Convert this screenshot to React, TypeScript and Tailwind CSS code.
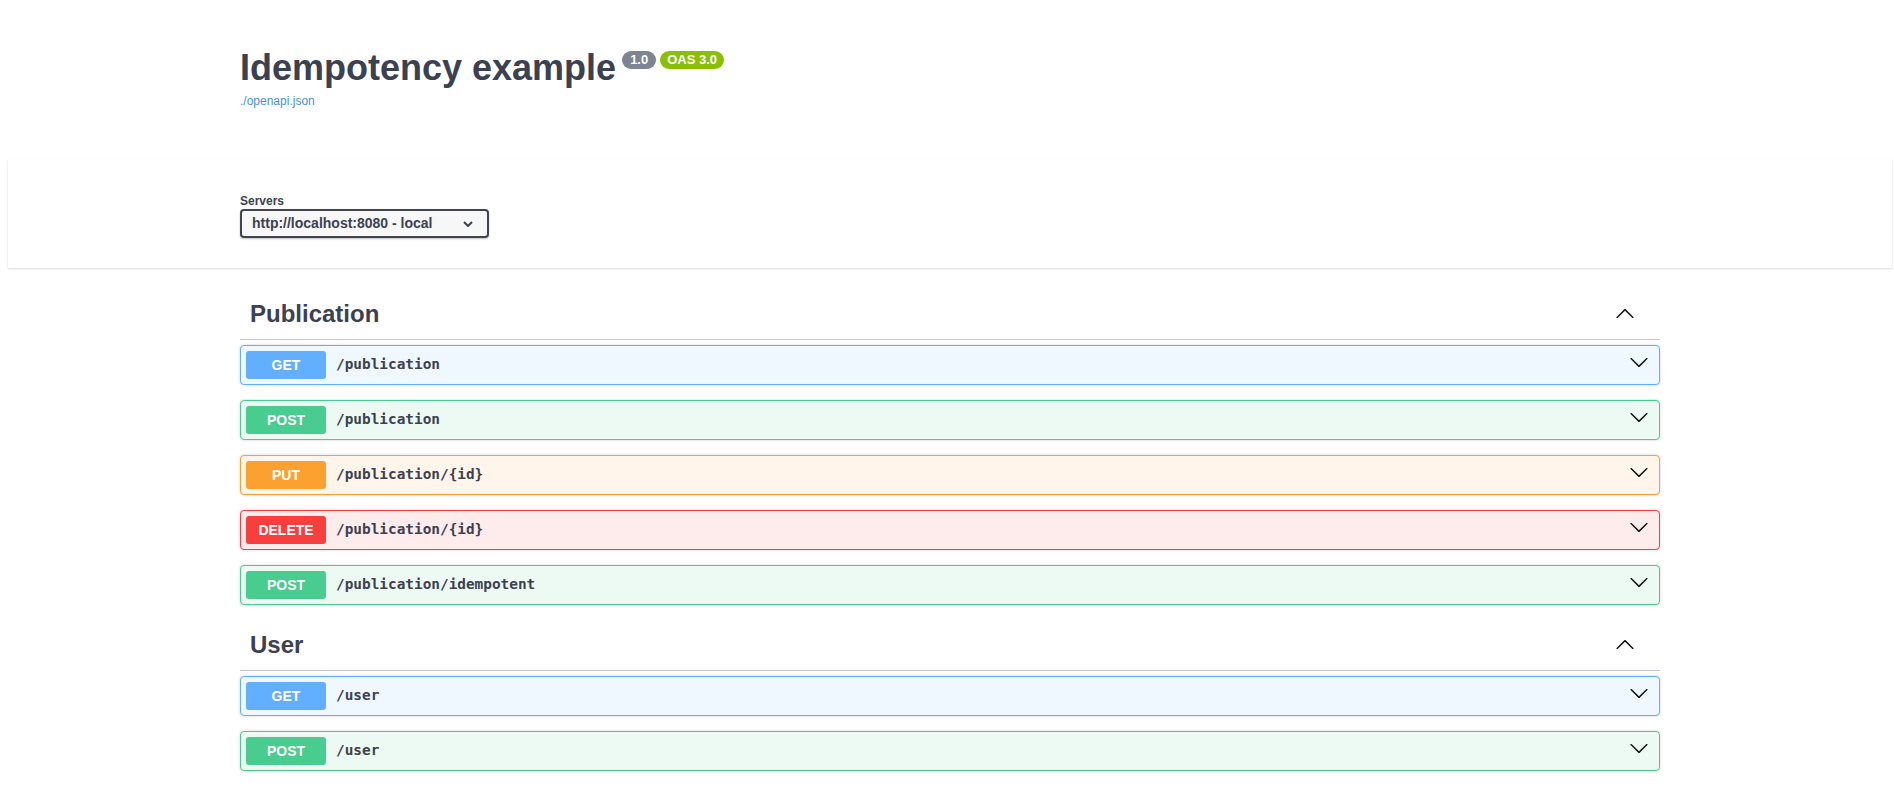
const sections = [
  {
    tag: "Publication",
    ops: [
      { method: "GET", path: "/publication" },
      { method: "POST", path: "/publication" },
      { method: "PUT", path: "/publication/{id}" },
      { method: "DELETE", path: "/publication/{id}" },
      { method: "POST", path: "/publication/idempotent" },
    ],
  },
  {
    tag: "User",
    ops: [
      { method: "GET", path: "/user" },
      { method: "POST", path: "/user" },
    ],
  },
];

const methodStyles: Record<string, { block: string; badge: string }> = {
  GET: { block: "bg-[#eff7ff] border-[#61affe]", badge: "bg-[#61affe]" },
  POST: { block: "bg-[#edfaf4] border-[#49cc90]", badge: "bg-[#49cc90]" },
  PUT: { block: "bg-[#fff5ea] border-[#fca130]", badge: "bg-[#fca130]" },
  DELETE: { block: "bg-[#feebeb] border-[#f93e3e]", badge: "bg-[#f93e3e]" },
};

function Arrow({ up = false, className = "" }: { up?: boolean; className?: string }) {
  return (
    <svg
      width="20"
      height="20"
      viewBox="0 0 20 20"
      className={`${up ? "rotate-180" : ""} ${className}`}
      fill="#111"
    >
      <path d="M17.418 6.109c.272-.268.709-.268.979 0s.271.701 0 .969l-7.908 7.83c-.27.268-.707.268-.979 0l-7.908-7.83c-.27-.268-.27-.701 0-.969.271-.268.709-.268.979 0L10 13.25l7.418-7.141z" />
    </svg>
  );
}

export default function App() {
  return (
    <div className="min-h-screen bg-white font-['Liberation_Sans',Arial,sans-serif] text-[#3b4151]">
      {/* Info */}
      <div className="ml-[240px] w-[1420px] pt-[50px]">
        <div className="flex items-start">
          <h2 className="text-[36px] leading-[36px] font-bold text-[#3b4151]">Idempotency example</h2>
          <span className="ml-[6px] mt-[1px] h-[18px] px-[8px] rounded-full bg-[#7d8492] text-white text-[13px] leading-[18px] font-bold">
            1.0
          </span>
          <span className="ml-[4px] mt-[1px] h-[18px] px-[7px] rounded-full bg-[#89bf04] text-white text-[13px] leading-[18px] font-bold">
            OAS 3.0
          </span>
        </div>
        <a className="block mt-[7px] text-[12px] leading-[16px] text-[#4990e2]">./openapi.json</a>
      </div>

      {/* Servers */}
      <div className="mt-[50px] ml-[8px] mr-[2px] bg-white shadow-[0_1px_2px_0_rgba(0,0,0,0.15)] pt-[34px] pb-[30px]">
        <div className="ml-[232px]">
          <div className="text-[12px] leading-[16px] font-bold">Servers</div>
          <div className="flex items-center justify-between w-[249px] h-[29px] pl-[10px] pr-[14px] border-2 border-[#41444e] rounded-[4px] bg-[#f7f7f7] shadow-[0_1px_2px_0_rgba(0,0,0,0.25)]">
            <span className="text-[14px] font-bold text-[#3b4151]">http://localhost:8080 - local</span>
            <svg width="10" height="6" viewBox="0 0 10 6" fill="none" stroke="#3b4151" strokeWidth="2">
              <path d="M1 1l4 4 4-4" />
            </svg>
          </div>
        </div>
      </div>

      {/* Operations */}
      <div className="ml-[240px] w-[1420px] mt-[21px]">
        {sections.map((s) => (
          <div key={s.tag}>
            <div className="flex items-start pt-[11px] pb-[11px] pl-[10px] pr-[20px] mb-[5px] border-b border-[#c4c6cb]">
              <h3 className="flex-1 text-[24px] leading-[28px] font-bold">{s.tag}</h3>
              <Arrow up className="mt-[4px] mr-[5px]" />
            </div>
            {s.ops.map((op, i) => {
              const st = methodStyles[op.method];
              return (
                <div
                  key={i}
                  className={`flex items-center h-[40px] p-[5px] mb-[15px] border rounded-[4px] shadow-[0_0_3px_rgba(0,0,0,0.19)] ${st.block}`}
                >
                  <span
                    className={`flex items-center justify-center w-[80px] h-[28px] rounded-[3px] text-white text-[14px] font-bold ${st.badge}`}
                  >
                    {op.method}
                  </span>
                  <span className="flex-1 px-[10px] font-['DejaVu_Sans_Mono',monospace] text-[14.4px] font-bold text-[#3b4151]">
                    {op.path}
                  </span>
                  <Arrow className="self-start mt-[1px] mr-[5px]" />
                </div>
              );
            })}
          </div>
        ))}
      </div>
    </div>
  );
}
